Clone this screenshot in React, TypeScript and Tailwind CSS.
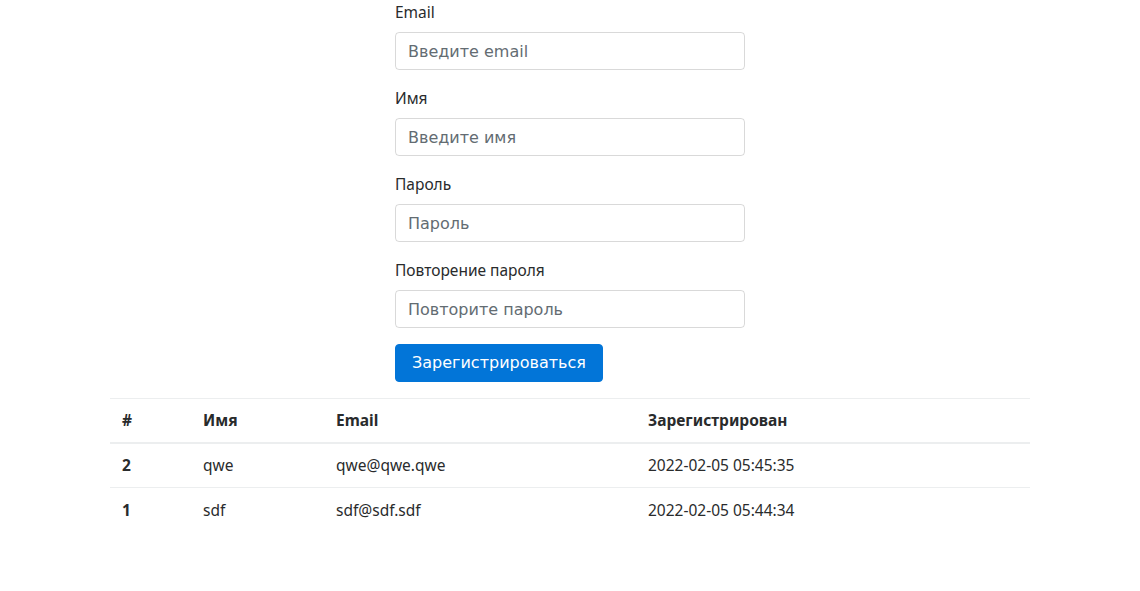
import React from "react";

const users = [
  { id: 2, name: "qwe", email: "qwe@qwe.qwe", created: "2022-02-05 05:45:35" },
  { id: 1, name: "sdf", email: "sdf@sdf.sdf", created: "2022-02-05 05:44:34" },
];

const fields = [
  { label: "Email", placeholder: "Введите email", type: "email" },
  { label: "Имя", placeholder: "Введите имя", type: "text" },
  { label: "Пароль", placeholder: "Пароль", type: "password" },
  { label: "Повторение пароля", placeholder: "Повторите пароль", type: "password" },
];

export default function App() {
  return (
    <div className="min-h-[591px] bg-white text-[#292b2c] font-['Noto_Sans',sans-serif] text-[15.5px]">
      <div className="w-[920px] mx-auto">
        {/* Form */}
        <form className="w-[350px] mx-auto" onSubmit={(e) => e.preventDefault()}>
          {fields.map((f) => (
            <div key={f.label} className="mb-4">
              <label className="block h-6 leading-[24px] mb-2">{f.label}</label>
              <input
                type={f.type}
                placeholder={f.placeholder}
                className="block w-full h-[38px] px-3 border border-black/15 rounded-[4px] font-['DejaVu_Sans',sans-serif] text-base text-[#464a4c] placeholder:text-[#636c72] outline-none"
              />
            </div>
          ))}
          <button
            type="submit"
            className="h-[38px] px-4 bg-[#0275d8] border border-[#0275d8] rounded-[4px] text-white font-['DejaVu_Sans',sans-serif] text-base"
          >
            Зарегистрироваться
          </button>
        </form>

        {/* Table */}
        <table className="w-full mt-4 border-collapse text-left table-fixed">
          <colgroup>
            <col className="w-[81px]" />
            <col className="w-[133px]" />
            <col className="w-[312px]" />
            <col />
          </colgroup>
          <thead>
            <tr className="border-t border-[#eceeef]">
              <th className="h-[44px] px-3 font-bold border-b-2 border-[#eceeef]">#</th>
              <th className="px-3 font-bold border-b-2 border-[#eceeef]">Имя</th>
              <th className="px-3 font-bold border-b-2 border-[#eceeef]">Email</th>
              <th className="px-3 font-bold border-b-2 border-[#eceeef]">Зарегистрирован</th>
            </tr>
          </thead>
          <tbody>
            {users.map((u, i) => (
              <tr key={u.id} className={i > 0 ? "border-t border-[#eceeef]" : ""}>
                <th className="h-[45px] px-3 font-bold">{u.id}</th>
                <td className="px-3">{u.name}</td>
                <td className="px-3">{u.email}</td>
                <td className="px-3">{u.created}</td>
              </tr>
            ))}
          </tbody>
        </table>
      </div>
    </div>
  );
}
